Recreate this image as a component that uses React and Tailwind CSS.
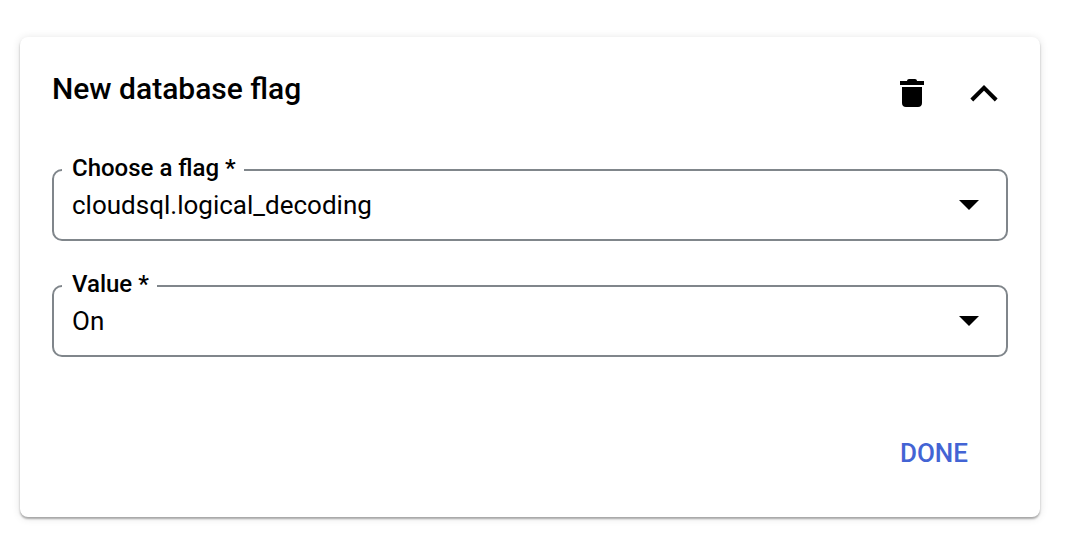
import { useId } from "react";

function SelectField({ label, options }) {
  const id = useId();
  return (
    <div className="relative">
      <label
        htmlFor={id}
        className="absolute -top-[15px] left-2.5 bg-white pr-2 pl-2.5 text-2xl leading-7 font-medium"
      >
        {label}
      </label>
      <select
        id={id}
        className="block h-18 w-full appearance-none rounded-[10px] border-2 border-[#80868b] bg-white pr-16 pl-[18px] text-[26px] leading-8"
      >
        {options.map((option) => (
          <option key={option}>{option}</option>
        ))}
      </select>
      <svg
        viewBox="0 0 20 10"
        className="pointer-events-none absolute top-[31px] right-[29px] h-2.5 w-5"
        aria-hidden="true"
      >
        <path d="M0 0h20L10 10z" />
      </svg>
    </div>
  );
}

export default function App() {
  return (
    <main className="bg-white pt-[37px] pr-[52px] pb-7 pl-5 font-['Roboto',sans-serif] text-black">
      <form
        className="rounded-lg bg-white px-8 pt-8 pb-10 shadow-[0_2px_2px_rgba(0,0,0,0.3),0_1px_8px_rgba(0,0,0,0.12)]"
        onSubmit={(event) => event.preventDefault()}
      >
        <header className="flex items-start justify-between">
          <h2 className="text-[30px] leading-10 font-medium">New database flag</h2>
          <div className="flex items-center">
            <button type="button" aria-label="Delete flag" className="grid size-12 place-items-center">
              <svg viewBox="0 0 24 28" className="h-7 w-6" aria-hidden="true">
                <path d="M0 2h7c0-1.300 1-2 2-2h6c1 0 2 .7 2 2h7v4H0zM2 8h20v16c0 2.500-1.500 4-4 4H6c-2.500 0-4-1.500-4-4z" />
              </svg>
            </button>
            <button type="button" aria-label="Collapse" className="ml-6 grid size-12 place-items-center">
              <svg viewBox="0 0 28 18" className="h-[18px] w-7" fill="none" stroke="currentColor" strokeWidth="4" aria-hidden="true">
                <path d="M1.800 16 14 3.800 26.200 16" />
              </svg>
            </button>
          </div>
        </header>
        <div className="mt-13 flex flex-col gap-11">
          <SelectField label="Choose a flag *" options={["cloudsql.logical_decoding"]} />
          <SelectField label="Value *" options={["On", "Off"]} />
        </div>
        <div className="mt-18 flex justify-end pr-6">
          <button type="submit" className="h-12 px-4 text-[26px] leading-8 font-medium text-[#4364d4]">
            DONE
          </button>
        </div>
      </form>
    </main>
  );
}
